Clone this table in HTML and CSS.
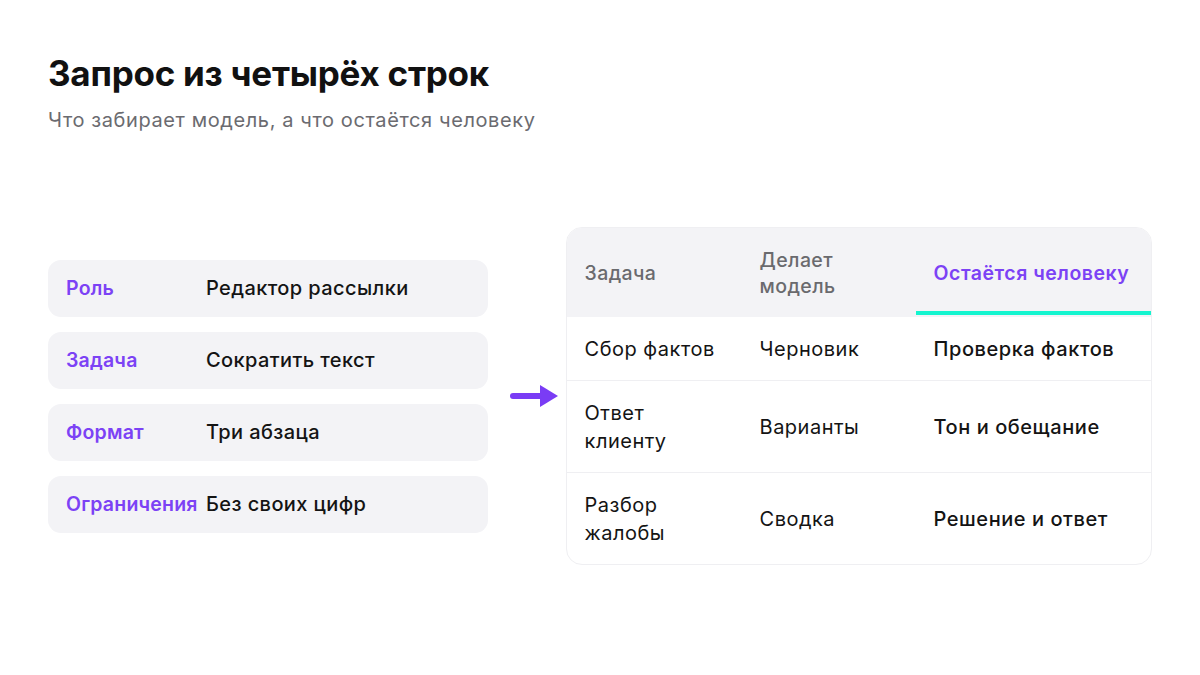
FILE: index.html
```html
<!DOCTYPE html>
<html lang="ru">
<head>
<meta charset="utf-8">
<link rel="stylesheet" href="styles.css">
</head>
<body>
<div class="page">
  <header class="head">
    <h1 class="title">Запрос из четырёх строк</h1>
    <p class="subtitle">Что забирает модель, а что остаётся человеку</p>
  </header>
  <main class="main">
    <div class="cards">
      <div class="card"><span class="card-label">Роль</span><span class="card-value">Редактор рассылки</span></div>
      <div class="card"><span class="card-label">Задача</span><span class="card-value">Сократить текст</span></div>
      <div class="card"><span class="card-label">Формат</span><span class="card-value">Три абзаца</span></div>
      <div class="card"><span class="card-label">Ограничения</span><span class="card-value">Без своих цифр</span></div>
    </div>
    <div class="arrow">
      <svg width="48" height="24" viewBox="0 0 48 24"><path d="M3 12H32" stroke="#7a3cf5" stroke-width="6" stroke-linecap="round"/><path d="M30 1L48 12L30 23Z" fill="#7a3cf5"/></svg>
    </div>
    <div class="table">
      <div class="row row-head">
        <div class="cell th">Задача</div>
        <div class="cell th">Делает<br>модель</div>
        <div class="cell th th-accent">Остаётся человеку</div>
      </div>
      <div class="row row-short">
        <div class="cell">Сбор фактов</div>
        <div class="cell">Черновик</div>
        <div class="cell strong">Проверка фактов</div>
      </div>
      <div class="row">
        <div class="cell">Ответ<br>клиенту</div>
        <div class="cell">Варианты</div>
        <div class="cell strong">Тон и обещание</div>
      </div>
      <div class="row">
        <div class="cell">Разбор<br>жалобы</div>
        <div class="cell">Сводка</div>
        <div class="cell strong">Решение и ответ</div>
      </div>
    </div>
  </main>
</div>
</body>
</html>
```
FILE: styles.css
```css
* { box-sizing: border-box; }
html, body { margin: 0; padding: 0; background: #ffffff; }
body {
  font-family: Inter, "Noto Sans", sans-serif;
  color: #111111;
  width: 1200px;
  height: 675px;
  overflow: hidden;
}
.page { padding: 51px 48px 0 48px; }
.title {
  margin: 0;
  font-size: 35px;
  font-weight: 700;
  line-height: 44px;
  letter-spacing: -0.25px;
  color: #111111;
}
.subtitle {
  margin: 12px 0 0 0;
  font-size: 20px;
  line-height: 26px;
  font-weight: 400;
  color: #6b6b70;
  letter-spacing: 0.6px;
}
.main {
  display: flex;
  align-items: center;
  margin-top: 94px;
}
.cards {
  width: 440px;
  display: flex;
  flex-direction: column;
  gap: 15px;
}
.card {
  height: 57px;
  background: #f3f3f6;
  border-radius: 13px;
  display: flex;
  align-items: center;
  padding-left: 18px;
}
.card-label {
  width: 140px;
  font-size: 19.5px;
  font-weight: 600;
  color: #7c42f5;
  letter-spacing: 0.2px;
}
.card-value {
  font-size: 20px;
  font-weight: 500;
  color: #141414;
  letter-spacing: 0.4px;
}
.arrow {
  width: 78px;
  display: flex;
  padding-left: 22px;
  padding-top: 0;
}
.table {
  width: 587px;
  border: 1px solid #efeff2;
  border-radius: 16px;
  overflow: hidden;
}
.row {
  display: grid;
  grid-template-columns: 175px 174px 1fr;
  height: 92px;
  border-top: 1px solid #efeff2;
}
.row-head {
  height: 89px;
  border-top: none;
  background: #f3f3f6;
}
.row-short { height: 63px; border-top: none; }
.cell {
  display: flex;
  align-items: center;
  padding-left: 18px;
  font-size: 20px;
  line-height: 28px;
  font-weight: 400;
  color: #141414;
  letter-spacing: 0.5px;
}
.cell.strong { font-weight: 500; letter-spacing: 0.55px; }
.th {
  font-size: 19.5px;
  line-height: 26px;
  font-weight: 500;
  color: #6a6a6e;
  letter-spacing: 0.4px;
}
.th-accent {
  color: #7c42f5;
  font-weight: 600;
  letter-spacing: 0.5px;
  position: relative;
}
.th-accent::after {
  content: "";
  position: absolute;
  left: 0;
  right: 0;
  bottom: 2px;
  height: 4px;
  background: #14f5cf;
}
```
